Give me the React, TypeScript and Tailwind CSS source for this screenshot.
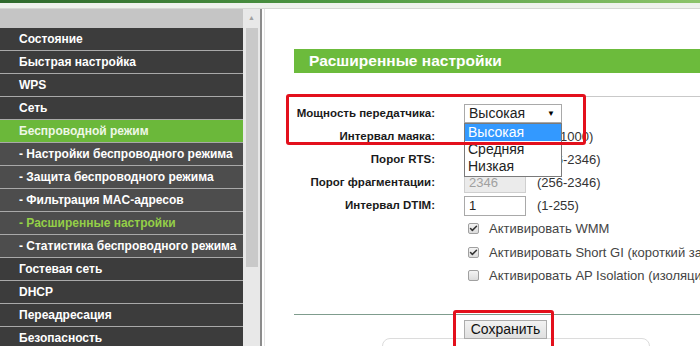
import { Check } from 'lucide-react'

const menu = [
  { label: 'Состояние', kind: 'main' },
  { label: 'Быстрая настройка', kind: 'main' },
  { label: 'WPS', kind: 'main' },
  { label: 'Сеть', kind: 'main' },
  { label: 'Беспроводной режим', kind: 'open' },
  { label: '- Настройки беспроводного режима', kind: 'sub' },
  { label: '- Защита беспроводного режима', kind: 'sub' },
  { label: '- Фильтрация MAC-адресов', kind: 'sub' },
  { label: '- Расширенные настройки', kind: 'current' },
  { label: '- Статистика беспроводного режима', kind: 'sub' },
  { label: 'Гостевая сеть', kind: 'main' },
  { label: 'DHCP', kind: 'main' },
  { label: 'Переадресация', kind: 'main' },
  { label: 'Безопасность', kind: 'main' },
]

const itemClass: Record<string, string> = {
  main: 'bg-[#3c3c3c] text-white',
  open: 'bg-[#6bb83a] text-[#eef7e6]',
  sub: 'bg-[#4d4d4d] text-white',
  current: 'bg-[#4d4d4d] text-[#94cf47]',
}

const Sidebar = () => (
  <aside className="w-[243px] shrink-0 flex flex-col bg-[#c5c5c5]">
    <div className="h-[19px] shrink-0" />
    {menu.map((m) => (
      <div
        key={m.label}
        className={`h-[23px] shrink-0 border-b border-[#a9a9a9] pl-[19px] flex items-center text-[12px] font-bold whitespace-nowrap ${itemClass[m.kind]}`}
      >
        {m.label}
      </div>
    ))}
  </aside>
)

const Scrollbar = () => (
  <div className="w-[17px] shrink-0 bg-[#e8e8e8] flex flex-col items-center">
    <div className="h-[19px] flex items-center justify-center text-[7px] text-[#a0a0a0]">▲</div>
    <div className="w-[12px] h-[239px] bg-[#c9c9c9]" />
  </div>
)

const Label = ({ children }: { children: string }) => (
  <div className="w-[141px] shrink-0 text-right text-[11.5px] font-bold text-[#1a1a1a] whitespace-nowrap">{children}</div>
)

const TextInput = ({ value, disabled }: { value: string; disabled?: boolean }) => (
  <div
    className={`w-[62px] h-[20px] border px-[4px] flex items-center text-[13px] ${
      disabled ? 'bg-[#ebebeb] border-[#cfcfcf] text-[#a0a0a0]' : 'bg-white border-[#a9a9a9] text-[#222]'
    }`}
  >
    {value}
  </div>
)

const Row = ({ label, children }: { label?: string; children: React.ReactNode }) => (
  <div className="h-[23px] flex items-center">
    {label ? <Label>{label}</Label> : <div className="w-[141px] shrink-0" />}
    <div className="ml-[29px] flex items-center">{children}</div>
  </div>
)

const Hint = ({ children }: { children: string }) => (
  <span className="ml-[11px] text-[13px] text-[#333]">{children}</span>
)

const Box = ({ checked }: { checked?: boolean }) => (
  <span className="ml-[4px] w-[11px] h-[11px] border border-[#a0a0a0] rounded-[2px] bg-gradient-to-b from-[#f4f4f4] to-[#dcdcdc] flex items-center justify-center">
    {checked && <Check size={9} strokeWidth={4} className="text-[#333]" />}
  </span>
)

const CheckRow = ({ checked, text }: { checked?: boolean; text: string }) => (
  <div className="h-[23.5px] flex items-center">
    <div className="w-[141px] shrink-0" />
    <div className="ml-[29px] flex items-center">
      <Box checked={checked} />
      <span className="ml-[10px] text-[13px] text-[#444] whitespace-nowrap">{text}</span>
    </div>
  </div>
)

export default function App() {
  return (
    <div className="w-[700px] h-[346px] overflow-hidden bg-white flex flex-col font-['Liberation_Sans',Arial,sans-serif]">
      <div className="h-[3px] shrink-0 bg-gradient-to-r from-[#2e6a2c] via-[#4f9a43] to-[#8cc46a]" />
      <div className="h-[6px] shrink-0 bg-[#eef2ec] border-b border-[#d5d8d3]" />
      <div className="flex flex-1 min-h-0">
        <Sidebar />
        <Scrollbar />
        <div className="w-[2px] shrink-0 bg-[#8c8c8c]" />
        <main className="flex-1 relative pl-[2px] pr-[1px]">
          <div className="h-full border-l border-[#e4e4e4] border-r-2 border-r-[#a8a8a8] pl-[29px] pt-[40px] relative">
            <div className="h-[24px] bg-[#6cbb3c] pl-[15px] flex items-center text-[15.5px] font-bold text-white">
              Расширенные настройки
            </div>
            <div className="mt-[23px] border-t border-[#c9c9c9]" />
            <div className="pt-[5px]">
              <Row label="Мощность передатчика:">
                <div className="w-[98px] h-[19px] border border-[#a9a9a9] bg-white pl-[4px] pr-[6px] flex items-center justify-between text-[14px] text-[#222]">
                  <span>Высокая</span>
                  <span className="text-[8px] text-black">▼</span>
                </div>
              </Row>
              <Row label="Интервал маяка:">
                <TextInput value="100" />
                <Hint>(40-1000)</Hint>
              </Row>
              <Row label="Порог RTS:">
                <TextInput value="2346" />
                <Hint>(256-2346)</Hint>
              </Row>
              <Row label="Порог фрагментации:">
                <TextInput value="2346" disabled />
                <Hint>(256-2346)</Hint>
              </Row>
              <Row label="Интервал DTIM:">
                <TextInput value="1" />
                <Hint>(1-255)</Hint>
              </Row>
              <CheckRow checked text="Активировать WMM" />
              <CheckRow checked text="Активировать Short GI (короткий защитный интервал)" />
              <CheckRow text="Активировать AP Isolation (изоляция точки доступа)" />
            </div>
            <div className="mt-[26px] h-[1px] bg-[#7f9c8d]" />
            <div className="relative">
              <div className="absolute left-[88px] top-[18px] w-[268px] h-[30px] rounded-lg border border-[#dcdcdc]" />
              <div className="relative ml-[170px] mt-[5px] w-[83px] h-[19px] border border-[#acacac] bg-gradient-to-b from-[#f2f2f2] to-[#e0e0e0] flex items-center justify-center text-[14px] text-[#111]">
                Сохранить
              </div>
            </div>

            {/* dropdown list opened over the form */}
            <div className="absolute left-[199px] top-[114px] w-[98px] border border-[#7a7a7a] bg-white text-[14px] leading-[17px] text-[#222]">
              <div className="bg-[#3399ff] text-white pl-[3px]">Высокая</div>
              <div className="pl-[3px]">Средняя</div>
              <div className="pl-[3px] pb-[1px]">Низкая</div>
            </div>

            {/* red annotation frames */}
            <div className="absolute left-[21px] top-[85px] w-[300px] h-[51px] border-[3px] border-[#e3101c] rounded-[3px]" />
            <div className="absolute left-[188px] top-[301px] w-[101px] h-[50px] border-[3px] border-[#e3101c] rounded-[3px]" />
          </div>
        </main>
      </div>
    </div>
  )
}
